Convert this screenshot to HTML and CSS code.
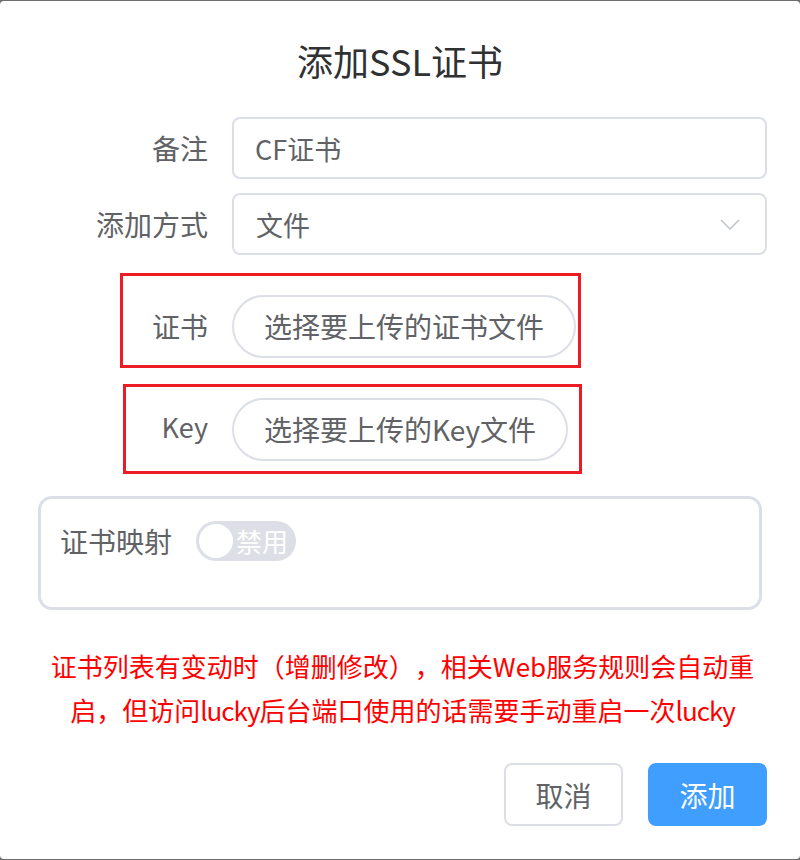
FILE: index.html
```html
<!DOCTYPE html>
<html lang="zh-CN">
<head>
<meta charset="utf-8">
<title>添加SSL证书</title>
<link rel="stylesheet" href="styles.css">
</head>
<body>
<div class="dialog">
  <div class="dialog-header">
    <h2 class="dialog-title">添加SSL证书</h2>
  </div>
  <div class="dialog-body">
    <div class="form-row row-remark">
      <label class="form-label">备注</label>
      <div class="form-control">
        <div class="input">CF证书</div>
      </div>
    </div>
    <div class="form-row row-mode">
      <label class="form-label">添加方式</label>
      <div class="form-control">
        <div class="input select">
          <span>文件</span>
          <svg class="chevron" width="20" height="11" viewBox="0 0 20 11"><polyline points="1,1 10,10 19,1" fill="none" stroke="#c0c4cc" stroke-width="1.5"/></svg>
        </div>
      </div>
    </div>
    <div class="form-row row-cert">
      <label class="form-label">证书</label>
      <div class="form-control">
        <button class="upload-btn">选择要上传的证书文件</button>
      </div>
    </div>
    <div class="form-row row-key">
      <label class="form-label">Key</label>
      <div class="form-control">
        <button class="upload-btn">选择要上传的Key文件</button>
      </div>
    </div>
    <div class="mapping-box">
      <div class="mapping-row">
        <span class="mapping-label">证书映射</span>
        <div class="switch">
          <span class="switch-knob"></span>
          <span class="switch-text">禁用</span>
        </div>
      </div>
    </div>
    <p class="notice">证书列表有变动时（增删修改），相关Web服务规则会自动重<br>启，但访问<span class="latin">lucky</span>后台端口使用的话需要手动重启一次<span class="latin">lucky</span></p>
  </div>
  <div class="dialog-footer">
    <button class="btn btn-default">取消</button>
    <button class="btn btn-primary">添加</button>
  </div>
  <div class="annot annot-cert"></div>
  <div class="annot annot-key"></div>
</div>
</body>
</html>
```

FILE: styles.css
```css
* { box-sizing: border-box; }

html, body {
  margin: 0;
  padding: 0;
  background: #6e6e6e;
  font-family: "Noto Sans CJK SC", "Noto Sans", sans-serif;
}

.dialog {
  position: relative;
  margin-top: 1px;
  width: 800px;
  height: 858px;
  background: #fff;
  border-radius: 4px;
  overflow: hidden;
}

.dialog-header {
  padding-top: 38px;
  text-align: center;
}

.dialog-title {
  margin: 0;
  font-size: 36px;
  line-height: 42px;
  font-weight: 400;
  color: #303133;
}

.dialog-body {
  padding: 36px 33px 0 38px;
}

.form-row {
  display: flex;
  align-items: center;
  height: 62px;
}

.row-remark { margin-bottom: 14px; }
.row-mode { margin-bottom: 40px; }
.row-cert { margin-bottom: 41px; }
.row-key { margin-bottom: 36px; }

.form-label {
  width: 194px;
  padding-right: 24px;
  text-align: right;
  font-size: 28px;
  color: #606266;
  flex-shrink: 0;
}

.row-key .form-label {
  font-size: 27px;
  padding-bottom: 6px;
}

.form-control {
  flex: 1;
  display: flex;
  align-items: center;
}

.input {
  width: 100%;
  height: 62px;
  border: 2px solid #dcdfe6;
  border-radius: 8px;
  padding: 0 25px 0 21px;
  font-size: 27px;
  color: #606266;
  display: flex;
  align-items: center;
}

.select {
  justify-content: space-between;
  padding-left: 22px;
}

.chevron { display: block; }

.upload-btn {
  height: 63px;
  padding: 0 30px 0 30px;
  border: 2px solid #dcdfe6;
  border-radius: 32px;
  background: #fff;
  font-family: inherit;
  font-size: 28px;
  color: #606266;
  cursor: pointer;
}

.mapping-box {
  width: 724px;
  height: 114px;
  border: 3px solid #dcdfe6;
  border-radius: 14px;
  padding: 22px 19px 0;
}

.mapping-row {
  display: flex;
  align-items: center;
  height: 40px;
}

.mapping-label {
  font-size: 28px;
  color: #606266;
}

.switch {
  margin-left: 24px;
  width: 100px;
  height: 40px;
  border-radius: 20px;
  background: #dcdfe6;
  display: flex;
  align-items: center;
  padding-left: 3px;
}

.switch-knob {
  width: 34px;
  height: 34px;
  border-radius: 50%;
  background: #fff;
}

.switch-text {
  margin-left: 3px;
  font-size: 26px;
  color: #fff;
  line-height: 1;
}

.notice {
  margin: 34px 0 0;
  text-align: center;
  font-size: 26px;
  line-height: 44px;
  color: #ff0000;
  white-space: nowrap;
  text-spacing-trim: space-all;
}

.notice .latin {
  letter-spacing: -1px;
}

.dialog-footer {
  display: flex;
  justify-content: flex-end;
  gap: 25px;
  padding: 31px 33px 0 0;
}

.btn {
  width: 119px;
  height: 63px;
  border-radius: 8px;
  font-family: inherit;
  font-size: 28px;
  cursor: pointer;
}

.btn-default {
  background: #fff;
  border: 2px solid #dcdfe6;
  color: #606266;
}

.btn-primary {
  background: #409eff;
  border: 2px solid #409eff;
  color: #fff;
}

.annot {
  position: absolute;
  border: 3px solid #ed1c24;
  pointer-events: none;
}

.annot-cert {
  left: 120px;
  top: 272px;
  width: 461px;
  height: 95px;
}

.annot-key {
  left: 123px;
  top: 383px;
  width: 459px;
  height: 90px;
}
```
